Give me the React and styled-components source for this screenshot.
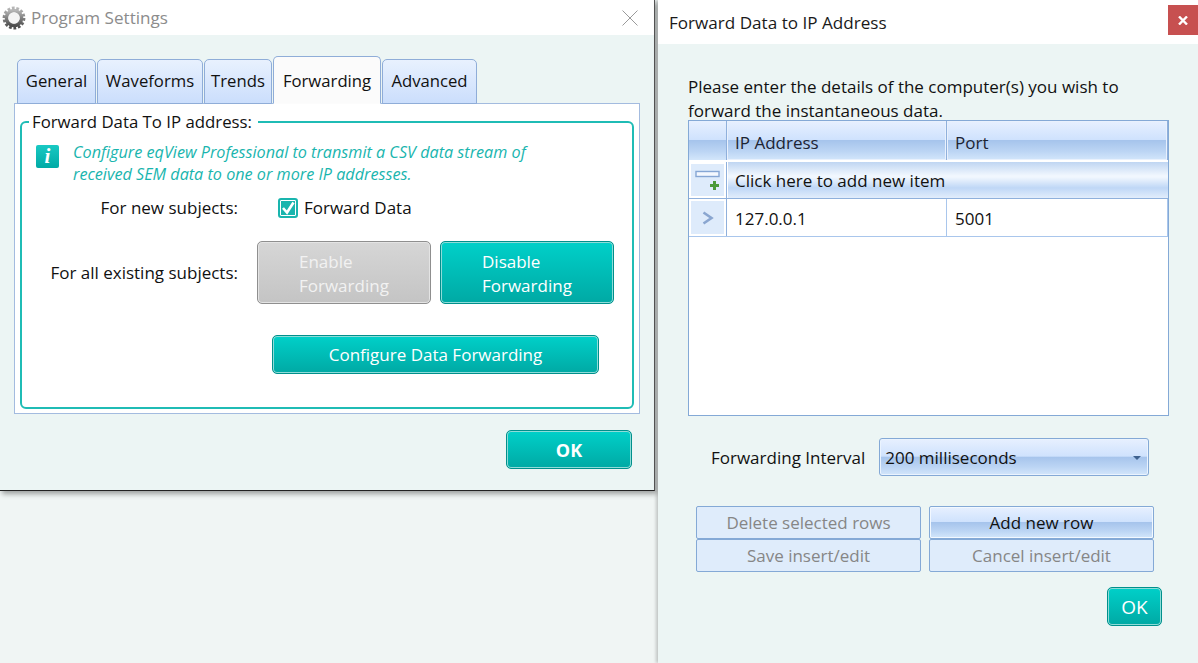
import React from 'react';
import styled, { createGlobalStyle, css } from 'styled-components';

const GlobalStyle = createGlobalStyle`
  html, body { margin: 0; padding: 0; height: 100%; background: #f0f5f4; }
  body { font-family: "Open Sans", "Noto Sans", "Liberation Sans", sans-serif; font-size: 17px; color: #111; overflow: hidden; }
`;

const glass = css`
  background: linear-gradient(to bottom, #e7f0ff 0%, #cfe2fd 48%, #a6c4ec 50%, #bcd5f4 78%, #d3e6fb 100%);
`;
const teal = css`
  background: linear-gradient(to bottom, #00d0c9 0%, #00a9a4 100%);
  border: 1px solid #00908c;
  box-shadow: inset 0 0 0 1px #8fdcd8;
  color: #fff;
`;

const Page = styled.div`
  display: flex;
  width: 1198px;
  height: 663px;
  overflow: hidden;
`;
const LeftColumn = styled.div`
  width: 655px;
  flex-shrink: 0;
`;
const SettingsWindow = styled.div`
  height: 491px;
  background: #ecf5f4;
  border-bottom: 1px solid #222;
  border-right: 1px solid #555;
  box-sizing: border-box;
  box-shadow: 2px 3px 5px rgba(0, 0, 0, 0.35);
`;
const TitleBar = styled.div`
  display: flex;
  align-items: center;
  justify-content: space-between;
  height: ${p => p.$h}px;
  background: #fff;
  box-sizing: border-box;
  padding: ${p => p.$pad};
`;
const TitleGroup = styled.div`
  display: flex;
  align-items: center;
  gap: 5px;
`;
const TitleText = styled.span`
  font-size: 17.1px;
  color: ${p => (p.$muted ? '#8c8c8c' : '#1a1a1a')};
`;
const SettingsBody = styled.div`
  padding: 24px 14px 0;
`;
const TabRow = styled.div`
  display: flex;
  align-items: flex-end;
  gap: 1px;
  padding-left: 3px;
  height: 45px;
  position: relative;
  z-index: 1;
  margin-bottom: -1px;
`;
const Tab = styled.div`
  display: flex;
  align-items: center;
  justify-content: center;
  box-sizing: border-box;
  width: ${p => p.$w}px;
  height: ${p => (p.$active ? 48 : 45)}px;
  font-size: 16.7px;
  border: 1px solid #8fadd8;
  border-bottom: ${p => (p.$active ? '1px solid #fcfcfc' : '1px solid #8fadd8')};
  border-radius: 5px 5px 0 0;
  padding-bottom: ${p => (p.$active ? 0 : 2)}px;
  background: ${p => (p.$active ? '#fbfbfb' : 'linear-gradient(to bottom, #e8f1fe, #cbdefc)')};
`;
const TabPanel = styled.div`
  width: 626px;
  height: 311px;
  box-sizing: border-box;
  background: #fff;
  border: 1px solid #a3bbdf;
  padding: 7px 5px 0;
`;
const GroupBox = styled.fieldset`
  margin: 0;
  padding: 0 14px;
  height: 298px;
  box-sizing: border-box;
  border: 2px solid #1fbcb5;
  border-radius: 6px;
  min-inline-size: 0;
`;
const GroupLegend = styled.legend`
  font-size: 16.8px;
  line-height: 22px;
  padding: 0 6px 0 3px;
  margin-left: -7px;
`;
const InfoRow = styled.div`
  display: flex;
  gap: 14px;
  margin-top: 8px;
`;
const InfoIcon = styled.div`
  width: 23px;
  height: 23px;
  flex-shrink: 0;
  margin-top: 4px;
  border-radius: 2px;
  background: linear-gradient(to bottom, #19c9c3, #00aaa5);
  color: #fff;
  font: italic 700 21px/23px "Liberation Serif", serif;
  text-align: center;
`;
const InfoText = styled.p`
  margin: 0;
  font-size: 16.2px;
  font-style: italic;
  line-height: 22px;
  color: #19b5ae;
`;
const FormRow = styled.div`
  display: grid;
  grid-template-columns: 202px 1fr;
  column-gap: ${p => p.$gap}px;
  align-items: center;
  margin-top: ${p => p.$top}px;
`;
const RowLabel = styled.div`
  text-align: right;
`;
const CheckLine = styled.div`
  display: flex;
  align-items: center;
  gap: 6px;
`;
const CheckBox = styled.div`
  width: 20px;
  height: 20px;
  box-sizing: border-box;
  border: 2px solid #19b5ae;
  border-radius: 3px;
  background: #19b5ae;
  box-shadow: inset 0 0 0 1px #fff;
  display: flex;
  align-items: center;
  justify-content: center;
`;
const ButtonPair = styled.div`
  display: flex;
  gap: 9px;
`;
const ToggleButton = styled.div`
  width: 174px;
  height: 63px;
  box-sizing: border-box;
  border-radius: 5px;
  padding: 8px 0 0 41px;
  line-height: 24px;
  ${p => (p.$off
    ? css`
      background: linear-gradient(to bottom, #d6d6d6, #c4c4c4);
      border: 1px solid #8f8f8f;
      box-shadow: inset 0 0 0 1px #e4e4e4;
      color: #f2f2f2;
    `
    : teal)}
`;
const ConfigureButton = styled.div`
  ${teal}
  width: 327px;
  height: 39px;
  margin: 31px 0 0 236px;
  box-sizing: border-box;
  border-radius: 5px;
  display: flex;
  align-items: center;
  justify-content: center;
`;
const OkRow = styled.div`
  display: flex;
  justify-content: flex-end;
  padding: ${p => p.$pad};
`;
const OkButton = styled.div`
  ${teal}
  width: ${p => p.$w}px;
  height: 39px;
  box-sizing: border-box;
  border-radius: 5px;
  display: flex;
  align-items: center;
  justify-content: center;
  font-size: ${p => (p.$bold ? 18 : 19)}px;
  font-weight: ${p => (p.$bold ? 700 : 400)};
`;
const ForwardWindow = styled.div`
  width: 540px;
  margin-left: 3px;
  background: #ecf5f4;
  box-shadow: -2px 0 3px rgba(0, 0, 0, 0.2);
`;
const CloseButton = styled.div`
  width: 30px;
  height: 30px;
  margin-top: -4px;
  background: #c75050;
  display: flex;
  align-items: center;
  justify-content: center;
`;
const ForwardBody = styled.div`
  padding: 31px 29px 0 30px;
`;
const Intro = styled.p`
  margin: 0;
  line-height: 24px;
  height: 45px;
  white-space: nowrap;
`;
const DataGrid = styled.div`
  width: 481px;
  height: 296px;
  box-sizing: border-box;
  border: 1px solid #84a9d6;
  background: #fff;
`;
const GridRow = styled.div`
  display: grid;
  grid-template-columns: 38px 220px 1fr;
  height: ${p => p.$h}px;
  box-sizing: border-box;
  border-bottom: ${p => p.$line};
`;
const SelectorCell = styled.div`
  box-sizing: border-box;
  border-right: 1px solid #8fb0dc;
  display: flex;
  align-items: center;
  justify-content: center;
  ${p => (p.$head
    ? glass
    : css`
      background: #deebfb;
      box-shadow: inset 0 0 0 2px #fff;
    `)}
`;
const HeaderCell = styled.div`
  ${glass}
  box-sizing: border-box;
  border-right: 1px solid #8fb0dc;
  box-shadow: inset 0 0 0 1px #e9f1fd;
  display: flex;
  align-items: center;
  padding: 3px 0 0 8px;
  color: #1c2433;
`;
const NewItemCell = styled.div`
  grid-column: 2 / 4;
  margin-left: 1px;
  background: linear-gradient(to bottom, #bfd5f2 0%, #f1f7fe 38%, #f1f7fe 42%, #bfd7f6 72%, #e2edfb 100%);
  display: flex;
  align-items: center;
  padding-left: 7px;
`;
const DataCell = styled.div`
  box-sizing: border-box;
  border-right: 1px solid #a9c6ec;
  display: flex;
  align-items: center;
  padding: 1px 0 0 8px;
`;
const IntervalRow = styled.div`
  display: flex;
  align-items: center;
  gap: 14px;
  margin: 22px 0 0 23px;
`;
const IntervalLabel = styled.div`
  white-space: nowrap;
`;
const ComboBox = styled.div`
  ${glass}
  position: relative;
  width: 270px;
  height: 38px;
  flex-shrink: 0;
  box-sizing: border-box;
  border: 1px solid #84a9d6;
  border-radius: 3px;
  box-shadow: inset 0 0 0 1px #eaf3fe;
  display: flex;
  align-items: center;
  padding-left: 5px;
`;
const ComboArrow = styled.div`
  position: absolute;
  right: 7px;
  top: 17px;
  border-left: 4px solid transparent;
  border-right: 4px solid transparent;
  border-top: 4px solid #3f628f;
`;
const ActionGrid = styled.div`
  display: grid;
  grid-template-columns: 225px 225px;
  grid-auto-rows: 33px;
  column-gap: 8px;
  margin: 30px 0 0 8px;
`;
const ActionButton = styled.div`
  box-sizing: border-box;
  border: 1px solid #84a9d6;
  border-radius: 2px;
  display: flex;
  align-items: center;
  justify-content: center;
  ${p => (p.$disabled
    ? css`
      background: #dfecfb;
      color: #868686;
    `
    : css`
      ${glass}
      box-shadow: inset 0 0 0 1px #f2f8ff;
      color: #111;
    `)}
`;

const GearIcon = () => (
  <svg width="24" height="24" viewBox="0 0 24 24">
    <defs>
      <linearGradient id="gearFill" x1="0" y1="0" x2="0" y2="1">
        <stop offset="0" stopColor="#b5b5b5" />
        <stop offset="1" stopColor="#4e4e4e" />
      </linearGradient>
    </defs>
    <circle cx="12" cy="12" r="9.4" fill="none" stroke="url(#gearFill)" strokeWidth="4" strokeDasharray="2.6 1.6" />
    <circle cx="12" cy="12" r="7.5" fill="none" stroke="url(#gearFill)" strokeWidth="3.6" />
    <circle cx="12" cy="12" r="5.6" fill="#f4f4f4" />
  </svg>
);

const CloseThin = () => (
  <svg width="16" height="16" viewBox="0 0 16 16" stroke="#9a9a9a" strokeWidth="1" fill="none">
    <path d="M0.5 0.5 L15.5 15.5 M15.5 0.5 L0.5 15.5" />
  </svg>
);

const CloseBold = () => (
  <svg width="10" height="9" viewBox="0 0 10 9" stroke="#fff" strokeWidth="2.4" fill="none">
    <path d="M1 0.5 L9 8.5 M9 0.5 L1 8.5" />
  </svg>
);

const CheckMark = () => (
  <svg width="14" height="14" viewBox="0 0 14 14" stroke="#fff" strokeWidth="2.6" fill="none">
    <path d="M2 7 L6 11.5 L12.5 1.5" />
  </svg>
);

const AddRowIcon = () => (
  <svg width="26" height="21" viewBox="0 0 26 21">
    <rect x="1" y="1.5" width="23" height="5" fill="#f4f8fe" stroke="#86a6d4" strokeWidth="1.4" />
    <path d="M18 11 h3 v3 h3 v3 h-3 v3 h-3 v-3 h-3 v-3 h3 z" fill="#4a9a3a" />
  </svg>
);

const RowArrow = () => (
  <svg width="12" height="14" viewBox="0 0 12 14" stroke="#8aa6d0" strokeWidth="2.6" fill="none">
    <path d="M1.5 1.5 L9.5 7 L1.5 12.5" />
  </svg>
);

const tabs = [
  { label: 'General', w: 79 },
  { label: 'Waveforms', w: 106 },
  { label: 'Trends', w: 68 },
  { label: 'Forwarding', w: 108, active: true },
  { label: 'Advanced', w: 95 },
];

const App = () => {
  return (
    <Page>
      <GlobalStyle />
      <LeftColumn>
        <SettingsWindow>
          <TitleBar $h={35} $pad="0 16px 0 2px">
            <TitleGroup>
              <GearIcon />
              <TitleText $muted>Program Settings</TitleText>
            </TitleGroup>
            <CloseThin />
          </TitleBar>
          <SettingsBody>
            <TabRow>
              {tabs.map(tab => (
                <Tab key={tab.label} $w={tab.w} $active={tab.active}>{tab.label}</Tab>
              ))}
            </TabRow>
            <TabPanel>
              <GroupBox>
                <GroupLegend>Forward Data To IP address:</GroupLegend>
                <InfoRow>
                  <InfoIcon>i</InfoIcon>
                  <InfoText>
                    Configure eqView Professional to transmit a CSV data stream of<br />
                    received SEM data to one or more IP addresses.
                  </InfoText>
                </InfoRow>
                <FormRow $gap={40} $top={11}>
                  <RowLabel>For new subjects:</RowLabel>
                  <CheckLine>
                    <CheckBox><CheckMark /></CheckBox>
                    Forward Data
                  </CheckLine>
                </FormRow>
                <FormRow $gap={19} $top={22}>
                  <RowLabel>For all existing subjects:</RowLabel>
                  <ButtonPair>
                    <ToggleButton $off>Enable<br />Forwarding</ToggleButton>
                    <ToggleButton>Disable<br />Forwarding</ToggleButton>
                  </ButtonPair>
                </FormRow>
                <ConfigureButton>Configure Data Forwarding</ConfigureButton>
              </GroupBox>
            </TabPanel>
            <OkRow $pad="16px 8px 0 0">
              <OkButton $w={126} $bold>OK</OkButton>
            </OkRow>
          </SettingsBody>
        </SettingsWindow>
      </LeftColumn>
      <ForwardWindow>
        <TitleBar $h={44} $pad="0 0 0 11px">
          <TitleText>Forward Data to IP Address</TitleText>
          <CloseButton><CloseBold /></CloseButton>
        </TitleBar>
        <ForwardBody>
          <Intro>
            Please enter the details of the computer(s) you wish to<br />
            forward the instantaneous data.
          </Intro>
          <DataGrid>
            <GridRow $h={41} $line="2px solid #fff">
              <SelectorCell $head />
              <HeaderCell>IP Address</HeaderCell>
              <HeaderCell>Port</HeaderCell>
            </GridRow>
            <GridRow $h={37} $line="1px solid #8fb0dc">
              <SelectorCell><AddRowIcon /></SelectorCell>
              <NewItemCell>Click here to add new item</NewItemCell>
            </GridRow>
            <GridRow $h={38} $line="1px solid #a9c6ec">
              <SelectorCell><RowArrow /></SelectorCell>
              <DataCell>127.0.0.1</DataCell>
              <DataCell>5001</DataCell>
            </GridRow>
          </DataGrid>
          <IntervalRow>
            <IntervalLabel>Forwarding Interval</IntervalLabel>
            <ComboBox>
              200 milliseconds
              <ComboArrow />
            </ComboBox>
          </IntervalRow>
          <ActionGrid>
            <ActionButton $disabled>Delete selected rows</ActionButton>
            <ActionButton>Add new row</ActionButton>
            <ActionButton $disabled>Save insert/edit</ActionButton>
            <ActionButton $disabled>Cancel insert/edit</ActionButton>
          </ActionGrid>
          <OkRow $pad="15px 7px 0 0">
            <OkButton $w={55}>OK</OkButton>
          </OkRow>
        </ForwardBody>
      </ForwardWindow>
    </Page>
  );
};

export default App;
